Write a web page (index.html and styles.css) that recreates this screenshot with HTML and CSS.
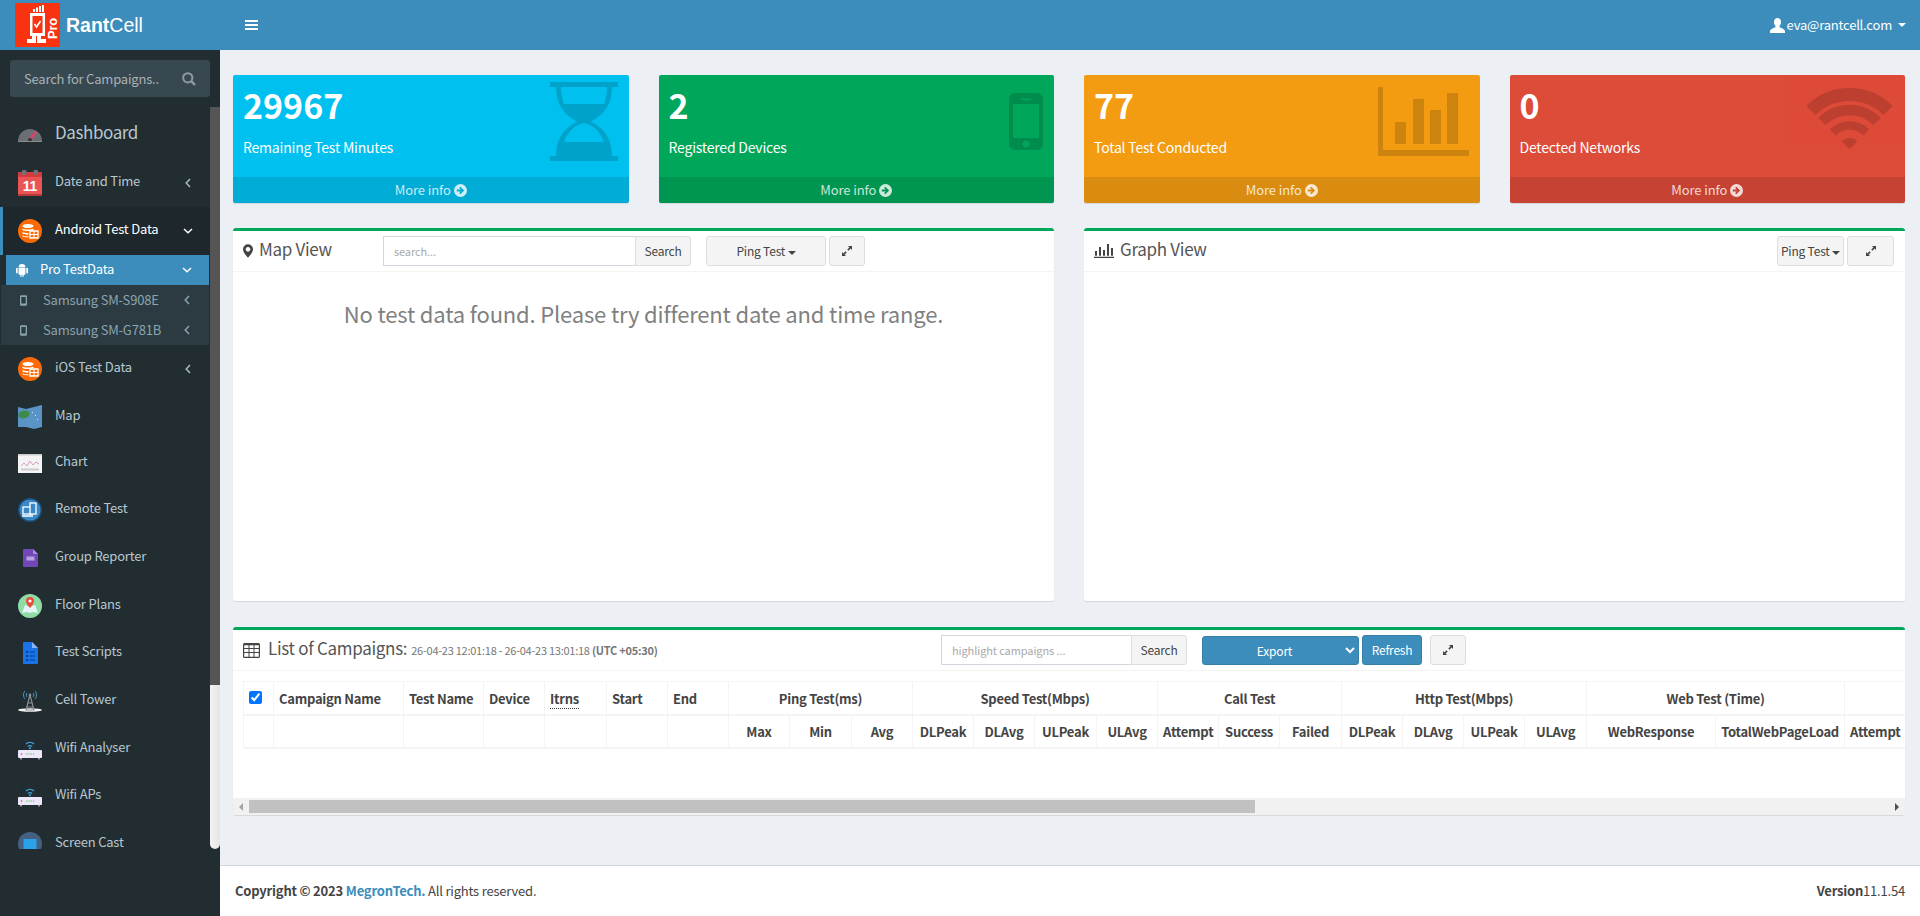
FILE: index.html
```html
<!DOCTYPE html>
<html lang="en">
<head>
    <meta charset="UTF-8">
    <title>RantCell</title>
    <link rel="stylesheet" href="styles.css">
</head>
<body>
    <!-- shared icons -->
    <svg class="defs" width="0" height="0">
        <symbol id="chev-left" viewBox="0 0 6 10"><path d="M5 1 1.200 5 5 9" fill="none" stroke="currentColor" stroke-width="1.500"/></symbol>
        <symbol id="chev-down" viewBox="0 0 10 6"><path d="M1 1l4 3.800L9 1" fill="none" stroke="currentColor" stroke-width="1.500"/></symbol>
        <symbol id="expand" viewBox="0 0 12 12"><path d="M7 1h4v4L9.600 3.600 7.500 5.700 6.300 4.500l2.100-2.100zM5 11H1V7l1.400 1.400 2.100-2.100 1.200 1.200-2.100 2.100z" fill="currentColor"/></symbol>
        <symbol id="go" viewBox="0 0 14 14"><path fill-rule="evenodd" d="M7 0a7 7 0 1 1 0 14A7 7 0 0 1 7 0zM3 6v2h4.300L5.500 9.800 6.800 11l4.100-4-4.100-4-1.300 1.200L7.300 6z" fill="currentColor"/></symbol>
        <symbol id="db" viewBox="0 0 24 24"><circle cx="12" cy="12" r="12" fill="#fb6a04"/><ellipse cx="10" cy="7" rx="5.500" ry="2" fill="#fff"/><path d="M4.500 9.500c2 1.400 9 1.400 11 0V11c-2 1.400-9 1.400-11 0zM4.500 13c2 1.200 5 1.200 6 1v1.600c-2 .2-4.500-.1-6-1.100zM4.500 16.200c1.500 1 4 1.200 6 1.100v1c-2 .1-4.500-.2-6-1.100z" fill="#fff"/><path d="M12 12h8v7h-8z" fill="none" stroke="#fff" stroke-width="1.300"/><path d="M16 12v7M12 15.500h8" stroke="#fff" stroke-width="1.100"/></symbol>
        <symbol id="router" viewBox="0 0 24 24"><path d="M4 1v12M20 1v12" stroke="#1b2b33" stroke-width="1.500"/><path d="M8 7a6 6 0 0 1 8 0M10 9.500a3 3 0 0 1 4 0" fill="none" stroke="#3ea6dc" stroke-width="1.200"/><circle cx="12" cy="11.300" r="1" fill="#3ea6dc"/><rect y="13" width="24" height="8" rx="1" fill="#ece8fa"/><circle cx="3.500" cy="17" r=".8" fill="#e23c3c"/><path d="M8 17h9" stroke="#6cbf5a" stroke-width="1.200" stroke-dasharray="1.300 1"/><path d="M3 21v1.500M21 21v1.500" stroke="#ddd" stroke-width="1.200"/></symbol>
        <symbol id="phone" viewBox="0 0 8 12"><path d="M1.500 0h5A1.500 1.500 0 0 1 8 1.500v9A1.500 1.500 0 0 1 6.500 12h-5A1.500 1.500 0 0 1 0 10.500v-9A1.500 1.500 0 0 1 1.500 0zM1.500 2v7.500h5V2z" fill="currentColor" fill-rule="evenodd"/></symbol>
    </svg>

    <header class="topbar">
        <a class="brand">
            <svg class="brand-logo" width="45" height="44" viewBox="0 0 45 44">
                <rect width="45" height="44" fill="#f9320f"/>
                <path d="M18 6h2v3h-2zM21 4.500h2V9h-2zM24 3h2v6h-2zM27 2h2v7h-2z" fill="#fff"/>
                <path d="M15 10h15v23H26v3h5v4H22v-7h-1v7H12v-4h5v-3h-2z" fill="#fff"/>
                <rect x="17.500" y="13" width="10" height="17" fill="#f9320f"/>
                <path d="M19.500 21l2 3 4-6" fill="none" stroke="#fff" stroke-width="1.600"/>
                <text class="brand-pro" transform="translate(42 36) rotate(-90)">Pro</text>
            </svg>
            <span class="brand-name"><b>Rant</b>Cell</span>
        </a>
        <a class="toggle"><span></span><span></span><span></span></a>
        <div class="user">
            <svg width="15" height="15" viewBox="0 0 15 15"><path d="M7.500 0C10 0 11 1.800 11 4c0 1.600-.6 3-1.500 4v1.300c1.600.8 5.500 1.500 5.500 4.200V15H0v-1.500c0-2.700 3.900-3.400 5.500-4.200V8C4.600 7 4 5.600 4 4c0-2.200 1-4 3.500-4z" fill="#fff"/></svg>
            <span>eva@rantcell.com</span>
            <i class="caret caret-light"></i>
        </div>
    </header>

    <div class="wrapper">
        <aside class="sidebar">
            <form class="side-search">
                <input type="text" placeholder="Search for Campaigns..">
                <svg width="14" height="14" viewBox="0 0 14 14"><circle cx="5.800" cy="5.800" r="4.600" fill="none" stroke="currentColor" stroke-width="2"/><path d="M9.200 9.200 13 13" stroke="currentColor" stroke-width="2.400"/></svg>
            </form>
            <div class="side-scroll">
                <nav class="side-list">
                    <ul class="menu">
                        <li class="menu-item menu-dash">
                            <svg class="menu-icon" width="24" height="14" viewBox="0 0 24 14"><path d="M0 13a12 12 0 0 1 24 0z" fill="#6b6f74"/><path d="M10.500 11 17 3l2 1.500-6 8z" fill="#d8446c"/><circle cx="12" cy="12" r="2" fill="#333"/><path d="M0 13h24v1H0z" fill="#8a8d90"/></svg>
                            <span>Dashboard</span>
                        </li>
                        <li class="menu-item menu-date">
                            <svg class="menu-icon" width="24" height="26" viewBox="0 0 24 26"><rect y="2" width="24" height="24" rx="2" fill="#ea5455"/><rect y="2" width="24" height="5" rx="1" fill="#d9393c"/><rect y="24" width="24" height="2" fill="#b93a3c"/><rect x="4" width="4.500" height="5" rx="1" fill="#6d7276"/><rect x="15.500" width="4.500" height="5" rx="1" fill="#6d7276"/><text class="cal-day" x="12" y="21">11</text></svg>
                            <span>Date and Time</span>
                            <svg class="chev" width="6" height="10"><use href="#chev-left"/></svg>
                        </li>
                        <li class="menu-item menu-open">
                            <svg class="menu-icon" width="24" height="24"><use href="#db"/></svg>
                            <span>Android Test Data</span>
                            <svg class="chev chev-d" width="10" height="6"><use href="#chev-down"/></svg>
                        </li>
                        <li class="sub-head">
                            <svg width="12" height="14" viewBox="0 0 14 16"><path d="M3 5a4 4 0 0 1 8 0zM3 5.800h8v6.700a1 1 0 0 1-1 1H9V16H7.500v-2.500h-1V16H5v-2.500H4a1 1 0 0 1-1-1zM0 6.500a1 1 0 0 1 2 0v4.500a1 1 0 0 1-2 0zM12 6.500a1 1 0 0 1 2 0v4.500a1 1 0 0 1-2 0z" fill="#fff"/></svg>
                            <span>Pro TestData</span>
                            <svg class="chev chev-d" width="10" height="6"><use href="#chev-down"/></svg>
                        </li>
                        <li class="sub-item">
                            <svg width="7" height="11"><use href="#phone"/></svg>
                            <span>Samsung SM-S908E</span>
                            <svg class="chev" width="6" height="10"><use href="#chev-left"/></svg>
                        </li>
                        <li class="sub-item">
                            <svg width="7" height="11"><use href="#phone"/></svg>
                            <span>Samsung SM-G781B</span>
                            <svg class="chev" width="6" height="10"><use href="#chev-left"/></svg>
                        </li>
                        <li class="menu-item">
                            <svg class="menu-icon" width="24" height="24"><use href="#db"/></svg>
                            <span>iOS Test Data</span>
                            <svg class="chev" width="6" height="10"><use href="#chev-left"/></svg>
                        </li>
                        <li class="menu-item">
                            <svg class="menu-icon" width="24" height="24" viewBox="0 0 24 24"><path d="M0 2l8 2 8-2 8-2v22l-8 2-8-2-8 0z" fill="#5a93c5"/><path d="M1 8c2-3 6-3 9-2 2 1 2 3 1 5-2 2-6 3-8 2-2 0-3-3-2-5z" fill="#3e8a4a"/><path d="M14 7l1 1M17 10l1 1M19 14l1 1" stroke="#d8e6ee" stroke-width="1"/></svg>
                            <span>Map</span>
                        </li>
                        <li class="menu-item menu-short">
                            <svg class="menu-icon" width="24" height="19" viewBox="0 0 24 19"><rect width="24" height="19" fill="#f4f4f4"/><rect width="24" height="1.500" fill="#ccc"/><path d="M3 12l3-3 3 3 3-5 3 4 3-3 3 2" fill="none" stroke="#d49ac4" stroke-width="1"/><rect x="3" y="14.500" width="18" height="2" fill="#ccc"/></svg>
                            <span>Chart</span>
                        </li>
                        <li class="menu-item">
                            <svg class="menu-icon" width="24" height="24" viewBox="0 0 24 24"><circle cx="12" cy="12" r="12" fill="#1d4f7c"/><circle cx="12" cy="12" r="10.500" fill="#3b88c9"/><rect x="5" y="9" width="9" height="7" fill="none" stroke="#fff" stroke-width="1.300"/><path d="M4 18h11" stroke="#fff" stroke-width="1.500"/><rect x="12" y="5" width="6" height="11" fill="#3b88c9" stroke="#fff" stroke-width="1.300"/></svg>
                            <span>Remote Test</span>
                        </li>
                        <li class="menu-item">
                            <svg class="menu-icon" width="24" height="20" viewBox="0 0 24 20"><path d="M5 2a1 1 0 0 1 1-1h9l5 5v12a1 1 0 0 1-1 1H6a1 1 0 0 1-1-1z" fill="#7248b9"/><path d="M15 1l5 5h-5z" fill="#a98bd9"/><rect x="8.500" y="8.500" width="8" height="4" fill="#b9a3df"/></svg>
                            <span>Group Reporter</span>
                        </li>
                        <li class="menu-item">
                            <svg class="menu-icon" width="24" height="24" viewBox="0 0 24 24"><circle cx="12" cy="12" r="12" fill="#8fdca5"/><path d="M4 19l3-8 5 1.500 5-1.500 3 8-5-1-3 1-3-1z" fill="#e5f4fa"/><path d="M12 3a4 4 0 0 1 4 4c0 3-4 7-4 7s-4-4-4-7a4 4 0 0 1 4-4z" fill="#ea4c3c"/><circle cx="12" cy="7" r="1.600" fill="#fff"/></svg>
                            <span>Floor Plans</span>
                        </li>
                        <li class="menu-item">
                            <svg class="menu-icon" width="24" height="22" viewBox="0 0 24 22"><path d="M5 1a1 1 0 0 1 1-1h8l6 6v15a1 1 0 0 1-1 1H6a1 1 0 0 1-1-1z" fill="#1a73e8"/><path d="M14 0l6 6h-6z" fill="#8ab4f8"/><path d="M8 9h2v2H8zM8 13h2v2H8zM8 17h2v2H8zM11.500 9.500H17v1h-5.500zM11.500 13.500H17v1h-5.500zM11.500 17.500H17v1h-5.500z" fill="#0b3d8c"/></svg>
                            <span>Test Scripts</span>
                        </li>
                        <li class="menu-item">
                            <svg class="menu-icon" width="24" height="22" viewBox="0 0 24 22"><ellipse cx="12" cy="20" rx="12" ry="1.800" fill="#f2f2f2"/><path d="M12 5l-4 15h8zM9.500 13h5M8.500 17h7" fill="none" stroke="#8b9094" stroke-width="1.200"/><path d="M7 1c-2 2-2 6 0 8M17 1c2 2 2 6 0 8M9 3c-1 1-1 3 0 4M15 3c1 1 1 3 0 4" fill="none" stroke="#4b95bb" stroke-width="1"/><circle cx="12" cy="5" r="1.300" fill="#8b9094"/></svg>
                            <span>Cell Tower</span>
                        </li>
                        <li class="menu-item">
                            <svg class="menu-icon" width="24" height="24"><use href="#router"/></svg>
                            <span>Wifi Analyser</span>
                        </li>
                        <li class="menu-item">
                            <svg class="menu-icon" width="24" height="24"><use href="#router"/></svg>
                            <span>Wifi APs</span>
                        </li>
                        <li class="menu-item">
                            <svg class="menu-icon" width="24" height="24" viewBox="0 0 24 24"><circle cx="12" cy="12" r="12" fill="#45617f"/><rect x="5.500" y="7" width="13" height="10" fill="#2aa2ea"/></svg>
                            <span>Screen Cast</span>
                        </li>
                    </ul>
                </nav>
                <div class="side-bar"><div class="side-thumb"></div></div>
            </div>
        </aside>

        <div class="page">
            <main class="content">
                <section class="stats">
                    <div class="stat stat-blue">
                        <div class="stat-body"><h3>29967</h3><p>Remaining Test Minutes</p></div>
                        <svg class="stat-icon icon-glass" width="68" height="79" viewBox="0 0 68 79"><path fill-rule="evenodd" d="M0 0h68v5H62C62 22 54 33 41 39.500 54 46 62 57 62 74h6v5H0v-5h6C6 57 14 46 27 39.500 14 33 6 22 6 5H0zM11 5C11 12 12 17 14 22H54C56 17 57 12 57 5zM34 41C24 43 17 51 14 60H54C51 51 44 43 34 41z"/></svg>
                        <a class="stat-foot">More info <svg width="13" height="13"><use href="#go"/></svg></a>
                    </div>
                    <div class="stat stat-green">
                        <div class="stat-body"><h3>2</h3><p>Registered Devices</p></div>
                        <svg class="stat-icon icon-phone" width="34" height="57" viewBox="0 0 34 57"><path fill-rule="evenodd" d="M6 0H28a6 6 0 0 1 6 6V51a6 6 0 0 1-6 6H6a6 6 0 0 1-6-6V6a6 6 0 0 1 6-6zM4 11V45H30V11zM12 5.500V7H22V5.500zM17 47.500a3.500 3.500 0 1 0 .01 0z"/></svg>
                        <a class="stat-foot">More info <svg width="13" height="13"><use href="#go"/></svg></a>
                    </div>
                    <div class="stat stat-orange">
                        <div class="stat-body"><h3>77</h3><p>Total Test Conducted</p></div>
                        <svg class="stat-icon icon-bars" width="91" height="69" viewBox="0 0 91 69"><path d="M0 0h5v63h86v6H0zM17 35h11v22H17zM35 12h11v45H35zM52 23h11v34H52zM69 6h11v51H69z"/></svg>
                        <a class="stat-foot">More info <svg width="13" height="13"><use href="#go"/></svg></a>
                    </div>
                    <div class="stat stat-red">
                        <div class="stat-body"><h3>0</h3><p>Detected Networks</p></div>
                        <svg class="stat-icon icon-wifi" width="87" height="62" viewBox="0 0 87 62"><g fill="none" stroke="#000"><path stroke-width="13" d="M5 23.500A54.500 54.500 0 0 1 82 23.500"/><path stroke-width="10.500" d="M15.900 34.400A39 39 0 0 1 71.100 34.400"/><path stroke-width="8.500" d="M26.900 45.400A23.500 23.500 0 0 1 60.100 45.400"/></g><path d="M43.500 62 35.700 54.200A11 11 0 0 1 51.300 54.200z"/></svg>
                        <a class="stat-foot">More info <svg width="13" height="13"><use href="#go"/></svg></a>
                    </div>
                </section>

                <section class="views">
                    <div class="box box-tall">
                        <div class="box-head">
                            <h4 class="box-title title-map">
                                <svg width="10" height="14" viewBox="0 0 12 16"><path fill-rule="evenodd" d="M6 0a6 6 0 0 1 6 6c0 3.500-4 8-6 10C4 14 0 9.500 0 6a6 6 0 0 1 6-6zM6 3.200a2.800 2.800 0 1 0 .01 0z" fill="#444"/></svg>
                                <span>Map View</span>
                            </h4>
                            <div class="search-group search-map">
                                <input type="text" placeholder="search...">
                                <button class="btn btn-addon">Search</button>
                            </div>
                            <button class="btn btn-ping">Ping Test <i class="caret"></i></button>
                            <button class="btn btn-expand"><svg width="12" height="12"><use href="#expand"/></svg></button>
                        </div>
                        <p class="empty-msg">No test data found. Please try different date and time range.</p>
                    </div>
                    <div class="box box-tall">
                        <div class="box-head">
                            <h4 class="box-title title-graph">
                                <svg width="20" height="14" viewBox="0 0 20 14"><path d="M0 12.800h20V14H0zM1 7h2v4.800H1zM5 3h2v8.800H5zM9 6h2v5.800H9zM13 0h2v11.800h-2zM17 4h2v7.800h-2z" fill="#444"/></svg>
                                <span>Graph View</span>
                            </h4>
                            <button class="btn btn-ping-sm">Ping Test <i class="caret"></i></button>
                            <button class="btn btn-expand-lg"><svg width="12" height="12"><use href="#expand"/></svg></button>
                        </div>
                    </div>
                </section>

                <section class="box">
                    <div class="box-head">
                        <h4 class="box-title title-list">
                            <svg width="17" height="15" viewBox="0 0 17 15"><path fill-rule="evenodd" d="M0 1.500A1.500 1.500 0 0 1 1.500 0h14A1.500 1.500 0 0 1 17 1.500v12a1.500 1.500 0 0 1-1.500 1.500h-14A1.500 1.500 0 0 1 0 13.500zM1.200 2.200v2.800h4.300V2.200zM6.500 2.200v2.800h4V2.200zM11.500 2.200v2.800h4.300V2.200zM1.200 6v3h4.300V6zM6.500 6v3h4V6zM11.500 6v3h4.300V6zM1.200 10v3.800h4.300V10zM6.500 10v3.800h4V10zM11.500 10v3.800h4.300V10z" fill="#444"/></svg>
                            <span>List of Campaigns:</span>
                            <small>26-04-23 12:01:18 - 26-04-23 13:01:18 <b>(UTC +05:30)</b></small>
                        </h4>
                        <div class="search-group search-list">
                            <input type="text" placeholder="highlight campaigns ...">
                            <button class="btn btn-addon">Search</button>
                        </div>
                        <select class="export">
                            <option>Export</option>
                        </select>
                        <button class="btn btn-refresh">Refresh</button>
                        <button class="btn btn-expand btn-expand-list"><svg width="12" height="12"><use href="#expand"/></svg></button>
                    </div>
                    <div class="table-wrap">
                        <table class="campaigns">
                            <colgroup>
                                <col class="c30"><col class="c130"><col class="c80"><col class="c61"><col class="c62"><col class="c61"><col class="c61">
                                <col class="c61"><col class="c62"><col class="c61">
                                <col class="c61"><col class="c61"><col class="c62"><col class="c61">
                                <col class="c61"><col class="c61"><col class="c62">
                                <col class="c61"><col class="c61"><col class="c61"><col class="c62">
                                <col class="c129"><col class="c129">
                                <col class="c61">
                            </colgroup>
                            <thead>
                                <tr>
                                    <th class="check"><input type="checkbox" checked></th>
                                    <th class="left">Campaign Name</th>
                                    <th class="left">Test Name</th>
                                    <th class="left">Device</th>
                                    <th class="left"><abbr>Itrns</abbr></th>
                                    <th class="left">Start</th>
                                    <th class="left">End</th>
                                    <th colspan="3">Ping Test(ms)</th>
                                    <th colspan="4">Speed Test(Mbps)</th>
                                    <th colspan="3">Call Test</th>
                                    <th colspan="4">Http Test(Mbps)</th>
                                    <th colspan="2">Web Test (Time)</th>
                                    <th></th>
                                </tr>
                                <tr>
                                    <th></th><th></th><th></th><th></th><th></th><th></th><th></th>
                                    <th>Max</th><th>Min</th><th>Avg</th>
                                    <th>DLPeak</th><th>DLAvg</th><th>ULPeak</th><th>ULAvg</th>
                                    <th>Attempt</th><th>Success</th><th>Failed</th>
                                    <th>DLPeak</th><th>DLAvg</th><th>ULPeak</th><th>ULAvg</th>
                                    <th>WebResponse</th><th>TotalWebPageLoad</th>
                                    <th>Attempt</th>
                                </tr>
                            </thead>
                        </table>
                    </div>
                    <div class="h-scroll">
                        <span class="h-arrow"><i class="tri-left"></i></span>
                        <div class="h-thumb"></div>
                        <span class="h-arrow h-arrow-end"><i class="tri-right"></i></span>
                    </div>
                </section>
            </main>

            <footer class="footer">
                <div><b>Copyright © 2023 <a>MegronTech.</a></b> All rights reserved.</div>
                <div><b>Version</b>11.1.54</div>
            </footer>
        </div>
    </div>
</body>
</html>
```

FILE: styles.css
```css
/* common */
* {
    box-sizing: border-box;
}
html, body {
    height: 100%;
}
body {
    margin: 0;
    overflow: hidden;
    background-color: #ecf0f5;
    color: #333;
    font-family: "Noto Sans CJK SC", "Noto Sans", sans-serif;
    font-size: 13px;
    letter-spacing: -0.2px;
    line-height: 20px;
    display: flex;
    flex-direction: column;
}
.defs {
    position: absolute;
}
ul {
    list-style: none;
    margin: 0;
    padding: 0;
}
button, input, select {
    font-family: inherit;
    letter-spacing: inherit;
}

/* top bar */
.topbar {
    height: 50px;
    flex: none;
    display: flex;
    align-items: center;
    background: #3c8dbc;
    color: #fff;
}
.brand {
    width: 220px;
    display: flex;
    align-items: center;
    padding-left: 15px;
}
.brand-logo {
    display: block;
}
.brand-pro {
    font-family: "Liberation Sans", sans-serif;
    font-size: 13px;
    font-weight: bold;
    fill: #fff;
}
.brand-name {
    font-family: "Liberation Sans", sans-serif;
    font-size: 19.5px;
    letter-spacing: 0;
    margin-left: 6px;
}
.toggle {
    margin-left: 25px;
    width: 13px;
    display: flex;
    flex-direction: column;
    gap: 2px;
}
.toggle span {
    height: 2px;
    background: #fff;
}
.user {
    margin-left: auto;
    margin-right: 14px;
    display: flex;
    align-items: center;
    gap: 2px;
}
.caret {
    display: inline-block;
    border-top: 4px solid #444;
    border-left: 4px solid transparent;
    border-right: 4px solid transparent;
    vertical-align: middle;
}
.caret-light {
    border-top-color: #fff;
    margin-left: 4px;
}

/* layout */
.wrapper {
    flex: 1;
    display: flex;
    min-height: 0;
}
.sidebar {
    width: 220px;
    flex: none;
    background: #222d32;
}
.page {
    flex: 1;
    min-width: 0;
    display: flex;
    flex-direction: column;
}
.content {
    flex: 1;
    padding: 25px 15px 0 13px;
}

/* sidebar */
.side-search {
    margin: 10px;
    height: 37px;
    display: flex;
    align-items: center;
    padding: 0 14px;
    background: #374850;
    border-radius: 3px;
    color: #8e9ba1;
}
.side-search input {
    flex: 1;
    min-width: 0;
    border: 0;
    padding: 0;
    background: transparent;
    font-size: 13px;
    color: #ccc;
    outline: none;
}
.side-search input::placeholder {
    color: #a9b2b6;
    opacity: 1;
}
.side-scroll {
    height: 742px;
    display: flex;
}
.side-list {
    flex: 1;
    min-width: 0;
    overflow: hidden;
}
.side-bar {
    width: 10px;
    flex: none;
    background: linear-gradient(to right, #f3f3f3, #e4e4e4);
    border-radius: 0 0 5px 5px;
}
.side-thumb {
    height: 578px;
    background: #555;
}
.menu {
    color: #b8c7ce;
}
.menu-item {
    height: 47.7px;
    display: flex;
    align-items: center;
    padding-left: 18px;
    position: relative;
}
.menu-item span {
    padding-bottom: 4px;
}
.menu-icon {
    flex: none;
    width: 24px;
    margin-right: 13px;
}
.menu-dash {
    height: 51px;
    font-size: 17px;
    letter-spacing: -0.4px;
}
.menu-dash .menu-icon {
    margin-top: 4px;
}
.menu-dash span {
    padding-bottom: 2px;
}
.menu-date {
    height: 49px;
}
.menu-short {
    height: 46px;
}
.menu-open {
    height: 48px;
    background: #1e282c;
    color: #fff;
    box-shadow: inset 3px 0 0 #3c8dbc;
}
.chev {
    position: absolute;
    right: 19px;
    top: 50%;
    margin-top: -5px;
    color: #a8b8bf;
}
.chev-d {
    margin-top: -3px;
    right: 17px;
    color: #fff;
}
.cal-day {
    font-family: "Liberation Sans", sans-serif;
    font-size: 14px;
    font-weight: bold;
    fill: #fff;
    text-anchor: middle;
}
.sub-head {
    height: 30px;
    margin-left: 6px;
    margin-right: 1px;
    padding-left: 10px;
    display: flex;
    align-items: center;
    background: #3c8dbc;
    color: #fff;
    position: relative;
}
.sub-head span {
    margin-left: 12px;
    padding-bottom: 2px;
}
.sub-head .chev-d {
    right: 17px;
}
.sub-item {
    height: 30px;
    margin-left: 1px;
    margin-right: 1px;
    padding-left: 19px;
    display: flex;
    align-items: center;
    background: #2c3b41;
    color: #8aa4af;
    position: relative;
}
.sub-item span {
    margin-left: 16px;
}
.sub-item .chev {
    right: 19px;
    color: #8aa4af;
}

/* stat cards */
.stats {
    display: grid;
    grid-template-columns: repeat(4, 1fr);
    gap: 30px;
    margin-bottom: 25px;
}
.stat {
    height: 128px;
    border-radius: 2px;
    color: #fff;
    position: relative;
    overflow: hidden;
    box-shadow: 0 1px 1px rgba(0, 0, 0, 0.1);
}
.stat-blue { background: #00c0ef; }
.stat-green { background: #00a65a; }
.stat-orange { background: #f39c12; }
.stat-red { background: #dd4b39; }
.stat-body {
    height: 102px;
    padding: 9px 10px;
}
.stat-body h3 {
    margin: 0;
    font-size: 34px;
    letter-spacing: 0;
    line-height: 41px;
    font-weight: 700;
}
.stat-body p {
    margin: 11px 0 0;
    font-size: 14px;
    line-height: 22px;
}
.stat-icon {
    position: absolute;
    fill: #000;
    opacity: 0.15;
}
.icon-glass { top: 7px; right: 11px; }
.icon-phone { top: 18px; right: 11px; }
.icon-bars { top: 12px; right: 11px; }
.icon-wifi { top: 12px; right: 12px; }
.stat-foot {
    height: 26px;
    display: flex;
    justify-content: center;
    align-items: center;
    gap: 3px;
    background: rgba(0, 0, 0, 0.1);
    color: rgba(255, 255, 255, 0.8);
    letter-spacing: -0.1px;
    line-height: 26px;
}

/* boxes */
.views {
    display: grid;
    grid-template-columns: 1fr 1fr;
    gap: 30px;
    margin-bottom: 26px;
}
.box {
    background: #fff;
    border-top: 3px solid #00a65a;
    border-radius: 3px;
    box-shadow: 0 1px 1px rgba(0, 0, 0, 0.1);
}
.box-tall {
    height: 373px;
}
.box-head {
    height: 41px;
    display: flex;
    align-items: center;
    padding: 0 10px;
    border-bottom: 1px solid #f4f4f4;
}
.box-title {
    margin: 0;
    font-size: 17px;
    letter-spacing: -0.3px;
    font-weight: 400;
    color: #555;
    display: flex;
    align-items: center;
    white-space: nowrap;
}
.box-title span {
    padding-bottom: 4px;
}
.box-title svg {
    margin-right: 6px;
}
.title-map {
    width: 140px;
}
.title-graph {
    flex: 1;
}
.title-list {
    width: 698px;
}
.title-list svg {
    margin-right: 8px;
}
.title-list small {
    margin-left: 4px;
    font-size: 11px;
    letter-spacing: -0.25px;
    color: #777;
}
.btn {
    height: 30px;
    padding: 0;
    background: #f4f4f4;
    border: 1px solid #ddd;
    border-radius: 3px;
    color: #444;
    font-size: 12px;
    letter-spacing: -0.2px;
    line-height: 18px;
}
.search-group {
    display: flex;
    height: 30px;
}
.search-group input {
    border: 1px solid #d2d6de;
    border-right: 0;
    padding: 0 10px;
    font-size: 11px;
    letter-spacing: -0.1px;
    outline: none;
    min-width: 0;
}
.search-group input::placeholder {
    color: #aaa;
    opacity: 1;
}
.btn-addon {
    width: 56px;
    border-radius: 0 3px 3px 0;
}
.search-map input {
    width: 252px;
}
.search-list input {
    width: 190px;
}
.btn-ping {
    width: 120px;
    margin-left: 15px;
}
.btn-expand {
    width: 36px;
    margin-left: 3px;
    display: flex;
    align-items: center;
    justify-content: center;
}
.btn-ping-sm {
    width: 67px;
}
.btn-expand-lg {
    width: 47px;
    margin-left: 3px;
    margin-right: 1px;
    display: flex;
    align-items: center;
    justify-content: center;
}
.empty-msg {
    margin: 0;
    padding-top: 27px;
    text-align: center;
    font-size: 22px;
    letter-spacing: -0.17px;
    line-height: 28px;
    color: #808080;
}
.export {
    width: 157px;
    height: 29px;
    margin-left: 15px;
    padding: 0 4px;
    background: #3c8dbc;
    border: 1px solid #367fa9;
    border-radius: 3px;
    color: #fff;
    font-size: 12px;
    text-align: center;
}
.btn-refresh {
    width: 60px;
    margin-left: 3px;
    background: #3c8dbc;
    border-color: #367fa9;
    color: #fff;
}
.btn-expand-list {
    margin-left: 8px;
}

/* campaign table */
.table-wrap {
    height: 127px;
    padding: 10px 0 0 10px;
    overflow: hidden;
}
.campaigns {
    table-layout: fixed;
    width: 1601px;
    border-collapse: collapse;
    font-size: 13px;
    letter-spacing: -0.25px;
    color: #444;
}
.campaigns th {
    height: 33px;
    padding: 6px 5px 4px;
    border: 1px solid #f4f4f4;
    border-bottom-width: 2px;
    font-weight: 700;
    line-height: 20px;
    text-align: center;
    white-space: nowrap;
    overflow: hidden;
}
.campaigns th.left {
    text-align: left;
}
.campaigns th.check {
    padding: 0 0 0 5px;
    text-align: left;
    vertical-align: top;
}
.check input {
    display: block;
    width: 13px;
    height: 13px;
    margin: 9px 0 0;
}
abbr {
    border-bottom: 1px dotted #333;
}
.c30 { width: 30px; }
.c61 { width: 61px; }
.c62 { width: 62px; }
.c80 { width: 80px; }
.c129 { width: 129px; }
.c130 { width: 130px; }

/* drawn scrollbar under the table */
.h-scroll {
    height: 17px;
    display: flex;
    align-items: center;
    background: #f1f1f1;
}
.h-arrow {
    width: 16px;
    flex: none;
    display: flex;
    justify-content: center;
}
.h-arrow-end {
    margin-left: auto;
}
.h-thumb {
    width: 1006px;
    height: 13px;
    background: #c1c1c1;
}
.tri-left, .tri-right {
    width: 0;
    height: 0;
    border-top: 4px solid transparent;
    border-bottom: 4px solid transparent;
}
.tri-left {
    border-right: 4px solid #a3a3a3;
}
.tri-right {
    border-left: 4px solid #505050;
}

/* footer */
.footer {
    height: 51px;
    flex: none;
    display: flex;
    justify-content: space-between;
    align-items: center;
    padding: 0 15px;
    background: #fff;
    border-top: 1px solid #d2d6de;
    color: #444;
}
.footer a {
    color: #3c8dbc;
}
```
